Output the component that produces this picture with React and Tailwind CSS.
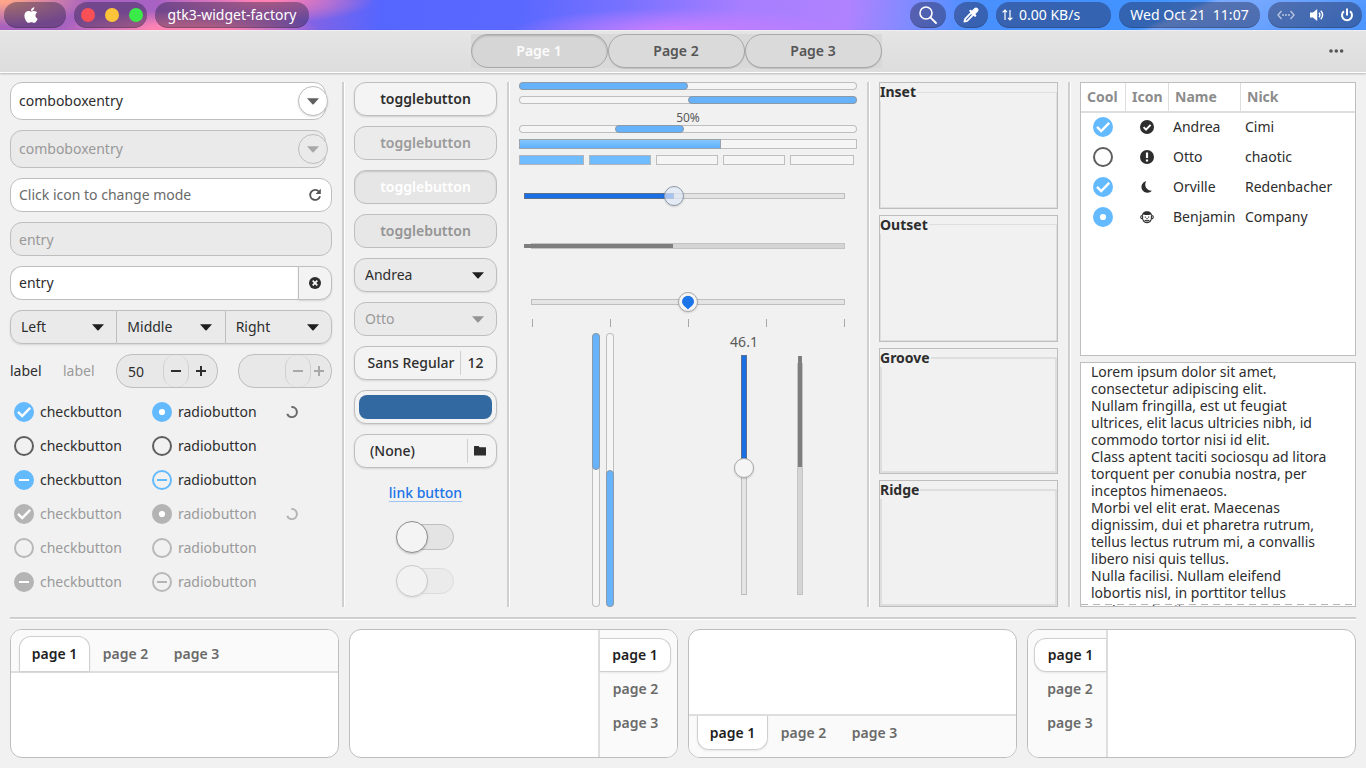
import { useState } from "react";
import { FaApple } from "react-icons/fa";

const PILL =
  "flex h-[26px] items-center rounded-full bg-[#1e1e3c]/40 text-white shadow-[inset_0_-1px_0_rgba(0,0,0,0.18)]";
const FIELD = "rounded-xl border border-[#bebebe]";
const BUTTON =
  "h-[34px] w-full rounded-xl border border-[#bebebe] bg-[#f3f3f3] shadow-[0_1px_2px_rgba(0,0,0,0.12)]";

/* ---------- small drawings ---------- */

function Arrow({ className = "" }) {
  return (
    <svg width="12" height="7" viewBox="0 0 12 7" className={className} aria-hidden="true">
      <path d="M0 0.3h12L6.6 6.2q-.6.6-1.2 0z" fill="currentColor" />
    </svg>
  );
}

function Minus() {
  return (
    <svg width="10" height="10" viewBox="0 0 10 10" aria-hidden="true">
      <path d="M0 5h10" stroke="currentColor" strokeWidth="2" />
    </svg>
  );
}

function Plus() {
  return (
    <svg width="10" height="10" viewBox="0 0 10 10" aria-hidden="true">
      <path d="M0 5h10M5 0v10" stroke="currentColor" strokeWidth="2" />
    </svg>
  );
}

function Spinner({ className }) {
  return (
    <svg width="12" height="12" viewBox="0 0 12 12" className={className} aria-hidden="true">
      <path d="M5.4 1.1a5 5 0 1 1-4.2 6.8" fill="none" stroke="currentColor" strokeWidth="2" />
    </svg>
  );
}

/* ---------- top bar ---------- */

function TopBar() {
  return (
    <header className="flex h-[30px] items-center gap-2 px-1 bg-[radial-gradient(ellipse_90px_26px_at_0px_0px,#ffa58a_10%,transparent_100%),radial-gradient(ellipse_130px_20px_at_190px_30px,#ff84b4_30%,transparent_100%),radial-gradient(ellipse_110px_24px_at_265px_0px,#ff80b4_10%,transparent_100%),radial-gradient(ellipse_170px_24px_at_680px_32px,#c87eff_10%,transparent_100%),linear-gradient(157deg,transparent_84%,rgba(140,178,255,0.7)_85%,transparent_97%),linear-gradient(100deg,#a862be_0%,#a862c4_14%,#8a62e0_22%,#5566ff_28%,#5a68ff_38%,#7a72ff_46%,#a67eff_54%,#b082ff_62%,#7a8cff_67%,#4a90ff_71%,#4193ff_84%,#5b9bff_92%,#4d96ff_100%)]">
      <button type="button" aria-label="Menu" className={`${PILL} w-[62px] justify-center`}>
        <FaApple className="mr-2 size-[18px]" />
      </button>
      <div className={`${PILL} w-[73px] justify-center gap-[10px] pl-[2px]`}>
        <button type="button" aria-label="Close" className="size-[14px] rounded-full bg-[#f94f57]" />
        <button type="button" aria-label="Minimize" className="size-[14px] rounded-full bg-[#fcc438]" />
        <button type="button" aria-label="Maximize" className="size-[14px] rounded-full bg-[#39ea49]" />
      </div>
      <div className={`${PILL} w-[154px] justify-center`}>gtk3-widget-factory</div>
      <div className="flex-1" />
      <button type="button" aria-label="Search" className={`${PILL} w-9 justify-center`}>
        <svg width="18" height="18" viewBox="0 0 18 18" fill="none" stroke="currentColor" aria-hidden="true">
          <circle cx="7" cy="7" r="6" strokeWidth="1.6" />
          <path d="M11.4 11.4 17 17" strokeWidth="1.8" strokeLinecap="round" />
        </svg>
      </button>
      <button type="button" aria-label="Pick a color" className={`${PILL} w-[34px] justify-center`}>
        <svg width="16" height="16" viewBox="0 0 16 16" fill="none" stroke="currentColor" aria-hidden="true">
          <path d="M8.8 5.2 2.2 11.800 1.400 14.600l2.800-.8 6.600-6.600" strokeWidth="1.8" strokeLinejoin="round" />
          <path d="M7.400 3.800 12.200 8.600" strokeWidth="2.200" strokeLinecap="round" />
          <path d="M10.200 5.800 13 3" strokeWidth="4.800" strokeLinecap="round" />
        </svg>
      </button>
      <div className={`${PILL} w-[115px] gap-[6px] pl-[6px]`}>
        <svg width="11" height="12" viewBox="0 0 11 12" fill="none" stroke="currentColor" strokeWidth="1.2" aria-hidden="true">
          <path d="M3 11V1M.6 3.4 3 1l2 2.2M8 1v10M6 8.8 8 11l2.4-2.4" />
        </svg>
        <span>0.00 KB/s</span>
      </div>
      <button type="button" className={`${PILL} w-[141px] justify-center whitespace-pre`}>
        {"Wed Oct 21  11:07"}
      </button>
      <button type="button" aria-label="System menu" className={`${PILL} w-[94px] justify-center gap-[15px]`}>
        <svg width="18" height="10" viewBox="0 0 18 10" fill="none" stroke="currentColor" className="opacity-60" aria-hidden="true">
          <path d="M4.5 1 1 5l3.5 4M13.5 1 17 5l-3.5 4" strokeWidth="1.4" />
          <path d="M5 5h8" strokeWidth="1.6" strokeDasharray="2 1" />
        </svg>
        <svg width="15" height="12" viewBox="0 0 15 12" aria-hidden="true">
          <path d="M0 3.6h3L7.2 0v12L3 8.4H0z" fill="currentColor" />
          <path d="M9 3.8q1.8 2.2 0 4.4M10.8 1.8q3.6 4.2 0 8.4" fill="none" stroke="currentColor" strokeWidth="1.4" />
        </svg>
        <svg width="14" height="14" viewBox="0 0 14 14" fill="none" stroke="currentColor" strokeWidth="2" aria-hidden="true">
          <path d="M4 3.2a5 5 0 1 0 6 0M7 .5v7" />
        </svg>
      </button>
    </header>
  );
}

function PageBar() {
  const [page, setPage] = useState(1);
  return (
    <nav className="flex h-[43px] border-t border-b border-t-[#efefef] border-b-white bg-linear-to-b from-[#e5e5e5] to-[#dddddd] pt-[3px] shadow-[0_1px_2px_rgba(0,0,0,0.25)]">
      <div className="flex-1" />
      <div className="flex h-[34px] bg-[#d9d9d9]">
        {[1, 2, 3].map((n) => (
          <button
            key={n}
            type="button"
            aria-pressed={page === n}
            onClick={() => setPage(n)}
            className={
              page === n
                ? "w-[137px] rounded-full border border-[#a9a9a9] bg-[#d6d6d6] font-semibold text-white/90 shadow-[inset_0_1px_2px_rgba(0,0,0,0.18)]"
                : "w-[137px] rounded-full border border-[#a9a9a9] bg-[#dadada] font-semibold text-[#555555] shadow-[0_1px_1px_rgba(0,0,0,0.14)]"
            }
          >
            Page {n}
          </button>
        ))}
      </div>
      <div className="flex flex-1 items-start justify-end pt-[9px] pr-[14px]">
        <button type="button" aria-label="More" className="mr-2 text-[#555555]">
          <svg width="16" height="16" viewBox="0 0 16 16" fill="currentColor" aria-hidden="true">
            <circle cx="3" cy="8" r="1.8" />
            <circle cx="8.3" cy="8" r="1.8" />
            <circle cx="13.6" cy="8" r="1.8" />
          </svg>
        </button>
      </div>
    </nav>
  );
}

/* ---------- first column ---------- */

function ComboEntry({ disabled }) {
  return (
    <div className="relative mr-1 flex h-[38px]">
      <input
        aria-label="Combo box entry"
        defaultValue="comboboxentry"
        disabled={disabled}
        className={`${FIELD} mr-[2px] min-w-0 flex-1 px-2 ${disabled ? "bg-[#eaeaea] text-[#999999]" : "bg-white"}`}
      />
      <button
        type="button"
        aria-label="Show choices"
        disabled={disabled}
        className={`absolute top-1 right-0 flex size-[30px] items-center justify-center rounded-full border border-[#bebebe] ${
          disabled ? "bg-[#eaeaea] text-[#a8a8a8]" : "bg-white text-[#606060] shadow-[0_1px_2px_rgba(0,0,0,0.15)]"
        }`}
      >
        <Arrow />
      </button>
    </div>
  );
}

function Select({ label, options, disabled, className }) {
  return (
    <div className="grid min-w-0 flex-1 items-center">
      <select
        aria-label={label}
        disabled={disabled}
        className={`h-[34px] w-full appearance-none px-[10px] opacity-100 [grid-area:1/1] ${className}`}
      >
        {options.map((o) => (
          <option key={o}>{o}</option>
        ))}
      </select>
      <Arrow
        className={`pointer-events-none mr-[13px] justify-self-end [grid-area:1/1] ${disabled ? "text-[#949494]" : "text-[#1e1e1e]"}`}
      />
    </div>
  );
}

function Spin({ label, value, disabled, className }) {
  const [n, setN] = useState(value);
  return (
    <div
      className={`flex h-[34px] items-center overflow-hidden rounded-2xl border border-[#bebebe] bg-[#e8e8e8] ${
        disabled ? "text-[#a8a8a8]" : "text-[#2d2d2d]"
      } ${className}`}
    >
      <input
        aria-label={label}
        value={n}
        onChange={(e) => setN(e.target.value)}
        disabled={disabled}
        className="h-[30px] min-w-0 flex-1 bg-transparent pl-[11px]"
      />
      <button
        type="button"
        aria-label="Decrease"
        disabled={disabled}
        onClick={() => setN(Number(n) - 1)}
        className="flex h-8 w-[26px] items-center justify-center rounded-xl border-x border-[#cfcfcf]"
      >
        <Minus />
      </button>
      <button
        type="button"
        aria-label="Increase"
        disabled={disabled}
        onClick={() => setN(Number(n) + 1)}
        className={`flex h-8 items-center justify-center pr-1 ${disabled ? "w-5" : "w-7"}`}
      >
        <Plus />
      </button>
    </div>
  );
}

function Tick({ type, state, disabled, name, label, children }) {
  const on = disabled ? "checked:bg-[#b4b4b4] checked:border-[#b4b4b4]" : "checked:bg-[#64baff] checked:border-[#64baff]";
  let box = disabled ? "border-[#b8b8b8]" : "border-[#5e5e5e]";
  let bar = "text-white";
  if (state === "mixed") {
    if (type === "checkbox") box = disabled ? "border-[#b4b4b4] bg-[#b4b4b4]" : "border-[#64baff] bg-[#64baff]";
    else {
      box = disabled ? "border-[#b8b8b8]" : "border-[#64baff]";
      bar = disabled ? "text-[#b4b4b4]" : "text-[#64baff]";
    }
  }
  return (
    <label className={`flex items-center gap-[6px] ${disabled ? "text-[#9a9a9a]" : ""}`}>
      <span className="grid size-5 place-items-center">
        <input
          type={type}
          name={name}
          aria-label={label}
          disabled={disabled}
          defaultChecked={state === "on"}
          className={`peer size-5 appearance-none rounded-full border-2 [grid-area:1/1] ${box} ${on}`}
        />
        {state === "mixed" ? (
          <svg viewBox="0 0 20 20" className={`pointer-events-none size-5 [grid-area:1/1] ${bar}`}>
            <path d="M5 10h10" stroke="currentColor" strokeWidth="2" />
          </svg>
        ) : (
          <svg viewBox="0 0 20 20" className="pointer-events-none hidden size-5 text-white [grid-area:1/1] peer-checked:block">
            {type === "checkbox" ? (
              <path d="M4 9.800l4.200 4.200 8-8.200" fill="none" stroke="currentColor" strokeWidth="2.400" />
            ) : (
              <circle cx="10" cy="10" r="3.1" fill="currentColor" />
            )}
          </svg>
        )}
      </span>
      {children}
    </label>
  );
}

const TICK_ROWS = [
  { state: "on", disabled: false },
  { state: "off", disabled: false },
  { state: "mixed", disabled: false },
  { state: "on", disabled: true },
  { state: "off", disabled: true },
  { state: "mixed", disabled: true },
];

function EntryColumn() {
  return (
    <section className="flex flex-col gap-[10px]">
      <ComboEntry />
      <ComboEntry disabled />
      <div className={`${FIELD} flex h-[34px] items-center bg-white pr-[9px] pl-2`}>
        <input
          aria-label="Mode entry"
          placeholder="Click icon to change mode"
          className="min-w-0 flex-1 bg-transparent placeholder:text-[#6a6a6a]"
        />
        <button type="button" aria-label="Change mode" className="text-[#555555]">
          <svg width="14" height="14" viewBox="0 0 14 14" aria-hidden="true">
            <path d="M10.9 3.6A5 5 0 1 0 12 8.2" fill="none" stroke="currentColor" strokeWidth="1.8" />
            <path d="M12.8.8V6H7.6z" fill="currentColor" />
          </svg>
        </button>
      </div>
      <input
        aria-label="Disabled entry"
        defaultValue="entry"
        disabled
        className={`${FIELD} h-[34px] bg-[#eaeaea] px-2 text-[#999999]`}
      />
      <div className="flex h-[34px]">
        <input
          aria-label="Entry"
          defaultValue="entry"
          className="min-w-0 flex-1 rounded-l-xl border border-r-0 border-[#bebebe] bg-white px-2"
        />
        <button
          type="button"
          aria-label="Clear"
          className="flex w-[34px] items-center justify-center rounded-r-xl border border-[#bebebe] bg-[#f3f3f3] text-[#2d2d2d] shadow-[0_1px_2px_rgba(0,0,0,0.12)]"
        >
          <svg width="12" height="12" viewBox="0 0 12 12" aria-hidden="true">
            <circle cx="6" cy="6" r="6" fill="currentColor" />
            <path d="M3.7 3.7l4.6 4.6M8.3 3.7 3.7 8.3" stroke="#ffffff" strokeWidth="1.7" />
          </svg>
        </button>
      </div>
      <div className="flex rounded-xl shadow-[0_1px_2px_rgba(0,0,0,0.12)]">
        <Select label="Left" options={["Left"]} className="rounded-l-xl border border-[#bebebe] bg-[#eaeaea]" />
        <Select label="Middle" options={["Middle"]} className="border-y border-[#bebebe] bg-[#eaeaea]" />
        <Select label="Right" options={["Right"]} className="rounded-r-xl border border-[#bebebe] bg-[#eaeaea]" />
      </div>
      <div className="flex items-center gap-5">
        <span className="w-[33px]">label</span>
        <span className="w-[33px] text-[#9a9a9a]">label</span>
        <Spin label="Amount" value="50" className="w-[102px]" />
        <Spin label="Disabled amount" value="" disabled className="min-w-0 flex-1" />
      </div>
      <div className="grid grid-cols-[138fr_134fr_46fr] gap-y-[6px] pl-1">
        {TICK_ROWS.map(({ state, disabled }, i) => (
          <div key={i} className="col-span-3 grid h-7 grid-cols-subgrid items-center">
            <Tick type="checkbox" state={state} disabled={disabled}>
              checkbutton
            </Tick>
            <Tick type="radio" name={disabled ? "radio-off" : "radio-on"} state={state} disabled={disabled}>
              radiobutton
            </Tick>
            {state === "on" && <Spinner className={disabled ? "text-[#b4b4b4]" : "text-[#6a6a6a]"} />}
          </div>
        ))}
      </div>
    </section>
  );
}

/* ---------- second column ---------- */

function Toggle({ initial, disabled }) {
  const [on, setOn] = useState(initial);
  let look = "bg-[#f4f4f4] text-[#2d2d2d] shadow-[0_1px_2px_rgba(0,0,0,0.14)]";
  if (disabled) look = on ? "bg-[#e7e7e7] text-[#949494]" : "bg-[#ebebeb] text-[#9a9a9a]";
  else if (on) look = "bg-[#e6e6e6] text-white shadow-[inset_0_1px_2px_rgba(0,0,0,0.14)]";
  return (
    <button
      type="button"
      aria-pressed={on}
      disabled={disabled}
      onClick={() => setOn(!on)}
      className={`h-[34px] w-full rounded-xl border border-[#bebebe] font-semibold ${look}`}
    >
      togglebutton
    </button>
  );
}

function Switch({ label, disabled }) {
  const [on, setOn] = useState(false);
  return (
    <button
      type="button"
      role="switch"
      aria-label={label}
      aria-checked={on}
      disabled={disabled}
      onClick={() => setOn(!on)}
      className={`flex h-[34px] w-[60px] items-center pr-[2px] pl-1 ${disabled ? "opacity-40" : ""}`}
    >
      <span
        className={`flex h-[26px] flex-1 items-center rounded-full border border-[#bebebe] ${
          on ? "justify-end bg-[#64baff]" : "bg-[#e4e4e4]"
        }`}
      >
        <span className="-ml-[5px] size-8 shrink-0 rounded-full border border-[#909090] bg-[#f4f4f4] shadow-[0_1px_2px_rgba(0,0,0,0.2)]" />
      </span>
    </button>
  );
}

function ButtonColumn() {
  return (
    <section className="flex flex-col items-center gap-[10px]">
      <Toggle initial={false} />
      <Toggle initial={false} disabled />
      <Toggle initial={true} />
      <Toggle initial={true} disabled />
      <div className="flex w-full">
        <Select
          label="Person"
          options={["Andrea", "Otto", "Orville", "Benjamin"]}
          className="rounded-xl border border-[#bebebe] bg-[#eaeaea] shadow-[0_1px_2px_rgba(0,0,0,0.1)]"
        />
      </div>
      <div className="flex w-full">
        <Select
          label="Disabled person"
          options={["Otto"]}
          disabled
          className="rounded-xl border border-[#bebebe] bg-[#eaeaea] text-[#9a9a9a]"
        />
      </div>
      <button type="button" className={`${BUTTON} flex items-center justify-center gap-[6px] font-medium`}>
        <span>Sans Regular</span>
        <span className="h-6 w-px bg-[#cfcfcf]" />
        <span>12</span>
      </button>
      <button type="button" aria-label="Choose a color" className={`${BUTTON} p-1`}>
        <span className="block h-6 rounded-lg bg-[#3269a0]" />
      </button>
      <button type="button" className={`${BUTTON} flex items-center gap-[6px] pr-[10px] pl-[15px] font-medium`}>
        <span className="flex-1 text-left">(None)</span>
        <span className="h-6 w-px bg-[#cfcfcf]" />
        <svg width="12" height="10" viewBox="0 0 12 10" aria-hidden="true">
          <path d="M0 .4Q0 0 .4 0H4.600l1 1.200h6q.4 0 .4.4v7.600q0 .4-.4.4H.4q-.4 0-.4-.4z" fill="#2d2d2d" />
        </svg>
      </button>
      <div className="flex h-8 items-start pt-[6px]">
        <a
          href="#link"
          className="leading-[17px] font-medium text-[#1b74e8] underline decoration-[#9cc4f5] underline-offset-3"
        >
          link button
        </a>
      </div>
      <Switch label="Switch" />
      <Switch label="Disabled switch" disabled />
    </section>
  );
}

/* ---------- third column ---------- */

function Progress({ label, start, end, vertical }) {
  const at = { marginLeft: `${start}%`, width: `${end - start}%` };
  return (
    <div
      role="progressbar"
      aria-label={label}
      aria-valuenow={end - start}
      className={`flex rounded-full bg-[#f5f5f5] shadow-[inset_0_0_0_1px_#bebebe] ${
        vertical ? `h-full w-2 flex-col ${start > 0 ? "justify-end" : ""}` : "h-2 w-full"
      }`}
    >
      <div
        className={`rounded-[4px] border border-[#8b9aa8] bg-[#66b3fb] ${vertical ? "w-2" : "h-2"}`}
        style={vertical ? { height: at.width } : at}
      />
    </div>
  );
}

function Scale({ label, initial, knob, disabled, fill = true, vertical, inset = true }) {
  const [v, setV] = useState(initial);
  const pos = `calc(10px + (100% - 20px) * ${v / 100})`;
  const trough = disabled ? "border-[#c4c4c4] bg-[#d4d4d4]" : "border-[#bebebe] bg-[#e4e4e4]";
  const bar = disabled ? "bg-[#7e7e7e]" : "border border-[#5c6f8c] bg-[#1b6fe4]";
  return (
    <div className={`relative flex ${vertical ? "h-full w-5 justify-center" : "h-5 items-center"}`}>
      <div
        className={`border ${trough} ${
          vertical ? `w-[6px] ${inset ? "mt-[7px]" : ""}` : `h-[6px] flex-1 ${inset ? "ml-[7px]" : ""}`
        }`}
      />
      {fill && (
        <div
          className={`absolute ${bar} ${
            vertical
              ? `top-0 ${disabled ? "w-1" : "w-[6px]"}`
              : `left-0 ${disabled ? "h-1" : "h-[6px]"}`
          }`}
          style={vertical ? { height: pos } : { width: pos }}
        />
      )}
      {knob && (
        <div
          className={`absolute size-5 rounded-full border shadow-[0_1px_2px_rgba(0,0,0,0.15)] ${
            knob === "ghost" ? "border-[#8c98a8] bg-[#dfe8f6]/70" : "border-[#a8a8a8] bg-[#f5f5f5]"
          } ${vertical ? "-translate-y-1/2" : "-translate-x-1/2"}`}
          style={vertical ? { top: pos } : { left: pos }}
        >
          {knob === "pin" && (
            <svg viewBox="0 0 18 18" className="size-[18px]" aria-hidden="true">
              <path d="M9 16.4C7.600 14.800 3 12 3 8.800a6 6 0 0 1 12 0c0 3.200-4.600 6-6 7.600z" fill="#1b74e8" />
            </svg>
          )}
        </div>
      )}
      <input
        type="range"
        aria-label={label}
        min="0"
        max="100"
        step="0.1"
        value={v}
        disabled={disabled}
        onChange={(e) => setV(Number(e.target.value))}
        className={`absolute inset-0 appearance-none bg-transparent [&::-webkit-slider-thumb]:size-5 [&::-webkit-slider-thumb]:appearance-none ${
          vertical ? "h-full w-5 [writing-mode:vertical-lr]" : "h-5 w-full"
        }`}
      />
    </div>
  );
}

function RangeColumn() {
  return (
    <section className="flex flex-col">
      <div className="flex flex-col gap-[6px]">
        <Progress label="Progress" start={0} end={50} />
        <Progress label="Inverted progress" start={50} end={100} />
        <div>
          <div className="h-[15px] text-center text-xs leading-[15px] text-[#5a5a5a]">50%</div>
          <Progress label="Activity" start={28.5} end={48.8} />
        </div>
        <div role="meter" aria-label="Level" aria-valuenow={60} className="flex h-[10px] border border-[#bebebe] bg-[#f5f5f5]">
          <div className="-my-px -ml-px w-3/5 border border-[#9aa4ae] bg-linear-to-b from-[#84c6ff] to-[#5fb0fb]" />
        </div>
        <div
          role="meter"
          aria-label="Discrete level"
          aria-valuenow={2}
          className="mr-[3px] grid h-[10px] grid-cols-[65fr_62fr_62fr_62fr_64fr] gap-[5px]"
        >
          <div className="border border-[#b0b6bc] bg-[#70bcff]" />
          <div className="border border-[#b0b6bc] bg-[#70bcff]" />
          <div className="border border-[#bebebe] bg-[#f5f5f5]" />
          <div className="border border-[#bebebe] bg-[#f5f5f5]" />
          <div className="border border-[#bebebe] bg-[#f5f5f5]" />
        </div>
      </div>
      <div className="flex flex-col pt-[21px] pr-3 pl-[5px]">
        <Scale label="Scale" initial={46.5} knob="ghost" />
        <div className="h-[30px]" />
        <Scale label="Disabled scale" initial={46.3} disabled />
        <div className="h-9" />
        <div className="pl-[7px]">
          <Scale label="Marked scale" initial={50} knob="pin" fill={false} inset={false} />
          <div className="flex justify-between pt-[7px] pl-px">
            {[0, 1, 2, 3, 4].map((t) => (
              <span key={t} className="h-2 w-px bg-[#a8a8a8]" />
            ))}
          </div>
        </div>
      </div>
      <div className="grid flex-1 grid-cols-2 pt-[6px]">
        <div className="flex justify-center gap-[6px] pr-[2px]">
          <Progress label="Vertical progress" start={0} end={50} vertical />
          <Progress label="Inverted vertical progress" start={50} end={100} vertical />
        </div>
        <div className="flex gap-[31px] pb-3 pl-[41px]">
          <div className="flex w-[30px] flex-col items-center">
            <div className="h-[22px] leading-[18px] text-[#5a5a5a]">46.1</div>
            <div className="flex-1">
              <Scale label="Vertical scale" initial={46.9} knob="plain" vertical inset={false} />
            </div>
          </div>
          <div className="pt-[23px]">
            <Scale label="Disabled vertical scale" initial={46.1} vertical disabled inset />
          </div>
        </div>
      </div>
    </section>
  );
}

/* ---------- fourth column ---------- */

const FRAMES = [
  { name: "Inset", line: "border", title: "-ml-px" },
  { name: "Outset", line: "border", title: "-ml-px" },
  { name: "Groove", line: "border-2", title: "-ml-[2px]" },
  { name: "Ridge", line: "border-2", title: "-ml-[2px]" },
];

function FrameColumn() {
  return (
    <section className="flex flex-col gap-[6px]">
      {FRAMES.map(({ name, line, title }) => (
        <div key={name} className="flex flex-1 border border-[#bebebe]">
          <fieldset className={`min-w-0 flex-1 border-[#dedede] ${line}`}>
            <legend className={`h-[18px] pr-px leading-[18px] font-bold ${title}`}>{name}</legend>
          </fieldset>
        </div>
      ))}
    </section>
  );
}

/* ---------- fifth column ---------- */

function RowIcon({ kind }) {
  return (
    <svg viewBox="0 0 14 14" className="mx-auto size-[14px] text-[#2d2d2d]" aria-hidden="true">
      {kind === "check" && (
        <>
          <circle cx="7" cy="7" r="7" fill="currentColor" />
          <path d="M3.600 7.200l2.400 2.400 4.600-4.800" fill="none" stroke="#ffffff" strokeWidth="1.9" />
        </>
      )}
      {kind === "alert" && (
        <>
          <circle cx="7" cy="7" r="7" fill="currentColor" />
          <path d="M7 2.400v5.600M7 9.400v2.200" stroke="#ffffff" strokeWidth="2.200" />
        </>
      )}
      {kind === "moon" && (
        <path d="M6.200 1C4.800 3.400 4.900 6.400 6.800 8.600c1.400 1.600 3.200 2.400 5.200 2.200A6 6 0 1 1 6.200 1z" fill="currentColor" />
      )}
      {kind === "monkey" && (
        <>
          <path d="M2 6.200C1.800 3 4 1.200 7 1.200S12.200 3 12 6.200L10.500 4.600Q7 5.600 3.500 4.600z" fill="currentColor" />
          <path
            d="M2.400 5.600C.2 5.200.2 9 2.600 8.800M11.600 5.600c2.200-.4 2.200 3.400-.2 3.200M2.600 5.600C2 11 4.400 12.600 7 12.600S12 11 11.400 5.600"
            fill="none"
            stroke="currentColor"
            strokeWidth="1.100"
          />
          <path d="M4.800 7.200h1M8.200 7.200h1M6.400 8.600h1.200M4.600 10.300q2.400 1 4.800 0" fill="none" stroke="currentColor" strokeWidth="1.200" />
        </>
      )}
    </svg>
  );
}

const PEOPLE = [
  { type: "checkbox", state: "on", icon: "check", name: "Andrea", nick: "Cimi" },
  { type: "checkbox", state: "off", icon: "alert", name: "Otto", nick: "chaotic" },
  { type: "checkbox", state: "on", icon: "moon", name: "Orville", nick: "Redenbacher" },
  { type: "radio", state: "on", icon: "monkey", name: "Benjamin", nick: "Company" },
];

const LOREM = `Lorem ipsum dolor sit amet,
consectetur adipiscing elit.
Nullam fringilla, est ut feugiat
ultrices, elit lacus ultricies nibh, id
commodo tortor nisi id elit.
Class aptent taciti sociosqu ad litora
torquent per conubia nostra, per
inceptos himenaeos.
Morbi vel elit erat. Maecenas
dignissim, dui et pharetra rutrum,
tellus lectus rutrum mi, a convallis
libero nisi quis tellus.
Nulla facilisi. Nullam eleifend
lobortis nisl, in porttitor tellus
malesuada vitae.`;

function DataColumn() {
  const th = "h-[30px] border-b-2 border-[#dedede] pl-[6px] text-left font-bold text-[#8c8c8c]";
  return (
    <section className="grid min-h-0 grid-rows-[274fr_245fr] gap-[6px]">
      <div className="overflow-hidden border border-[#bebebe] bg-white">
        <table className="w-full table-fixed border-separate border-spacing-0">
          <colgroup>
            <col className="w-[45px]" />
            <col className="w-[43px]" />
            <col className="w-[72px]" />
            <col />
          </colgroup>
          <thead>
            <tr>
              <th className={`${th} border-r border-r-[#dedede]`}>Cool</th>
              <th className={`${th} border-r border-r-[#dedede]`}>Icon</th>
              <th className={`${th} border-r border-r-[#dedede]`}>Name</th>
              <th className={th}>Nick</th>
            </tr>
          </thead>
          <tbody>
            {PEOPLE.map((p) => (
              <tr key={p.name} className="h-[30px]">
                <td className="pb-[2px] pl-3">
                  <Tick type={p.type} name={`cool-${p.name}`} state={p.state} label={`${p.name} is cool`} />
                </td>
                <td className="pr-[2px] pb-[2px]">
                  <RowIcon kind={p.icon} />
                </td>
                <td className="pb-[2px] pl-1">{p.name}</td>
                <td className="pb-[2px] pl-1">{p.nick}</td>
              </tr>
            ))}
          </tbody>
        </table>
      </div>
      <div className="relative flex border border-[#bebebe] bg-white">
        <textarea
          aria-label="Text"
          defaultValue={LOREM}
          className="h-full w-full resize-none overflow-hidden bg-transparent pl-[10px] leading-[17px] whitespace-pre"
        />
        <div className="pointer-events-none absolute inset-x-0 bottom-px h-px bg-[repeating-linear-gradient(90deg,#b4b4b4_0_7px,#ffffff_7px_12px)]" />
      </div>
    </section>
  );
}

/* ---------- notebooks ---------- */

const SIDES = {
  top: {
    box: "flex-col",
    strip: "flex-row px-2 pt-[6px] border-b-2",
    tab: "h-[35px] w-[71px]",
    on: "rounded-t-xl border border-b-0",
  },
  right: {
    box: "flex-row-reverse",
    strip: "flex-col pt-2 pr-[6px] border-l-2",
    tab: "h-[34px] w-[71px]",
    on: "rounded-r-xl border border-l-0",
  },
  bottom: {
    box: "flex-col-reverse",
    strip: "flex-row px-2 pb-[7px] border-t-2",
    tab: "h-[34px] w-[71px]",
    on: "rounded-b-xl border border-t-0",
  },
  left: {
    box: "flex-row",
    strip: "flex-col pt-2 pl-[6px] border-r-2",
    tab: "h-[34px] w-[72px]",
    on: "rounded-l-xl border border-r-0",
  },
};

function Notebook({ side }) {
  const [page, setPage] = useState(1);
  const s = SIDES[side];
  return (
    <div className={`flex h-[129px] overflow-hidden rounded-xl border border-[#bebebe] bg-white ${s.box}`}>
      <div role="tablist" className={`flex border-[#dedede] bg-[#fafafa] ${s.strip}`}>
        {[1, 2, 3].map((n) => (
          <button
            key={n}
            type="button"
            role="tab"
            aria-selected={page === n}
            onClick={() => setPage(n)}
            className={`font-semibold ${s.tab} ${
              page === n
                ? `border-[#cfcfcf] bg-white text-[#1e1e1e] shadow-[0_1px_2px_rgba(0,0,0,0.08)] ${s.on}`
                : "text-[#6a6a6a]"
            }`}
          >
            page {n}
          </button>
        ))}
      </div>
      <div role="tabpanel" className="flex-1" />
    </div>
  );
}

function Rule() {
  return <div className="bg-[#cfcfcf] shadow-[1px_0_0_#ffffff]" />;
}

export default function App() {
  return (
    <div className="flex min-h-screen flex-col bg-[#f1f1f1] font-['Noto_Sans',sans-serif] text-sm text-[#2d2d2d]">
      <TopBar />
      <PageBar />
      <main className="flex flex-1 flex-col gap-[10px] px-[10px] pt-[9px] pb-[10px]">
        <div className="grid flex-1 grid-cols-[minmax(0,322fr)_2px_minmax(0,143fr)_2px_minmax(0,338fr)_2px_minmax(0,179fr)_2px_minmax(0,276fr)] gap-x-[10px]">
          <EntryColumn />
          <Rule />
          <ButtonColumn />
          <Rule />
          <RangeColumn />
          <Rule />
          <FrameColumn />
          <Rule />
          <DataColumn />
        </div>
        <div className="h-[2px] bg-[#cfcfcf] shadow-[0_1px_0_#ffffff]" />
        <div className="grid grid-cols-4 gap-[10px]">
          <Notebook side="top" />
          <Notebook side="right" />
          <Notebook side="bottom" />
          <Notebook side="left" />
        </div>
      </main>
    </div>
  );
}
